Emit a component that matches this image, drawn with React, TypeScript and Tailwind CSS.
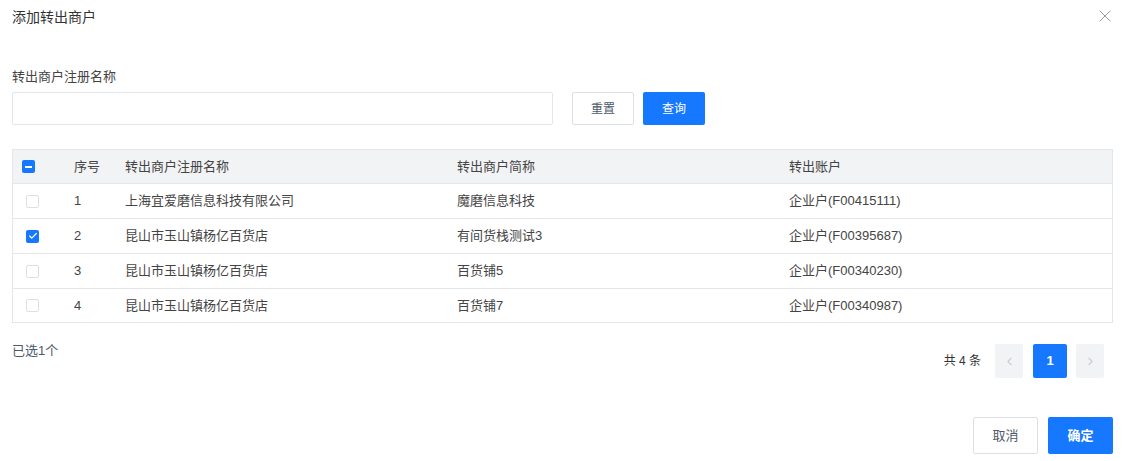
import { X, ChevronLeft, ChevronRight, Check } from "lucide-react";

interface Row {
  id: number;
  name: string;
  short: string;
  account: string;
  checked: boolean;
}

const rows: Row[] = [
  { id: 1, name: "上海宜爱磨信息科技有限公司", short: "魔磨信息科技", account: "企业户(F00415111)", checked: false },
  { id: 2, name: "昆山市玉山镇杨亿百货店", short: "有间货栈测试3", account: "企业户(F00395687)", checked: true },
  { id: 3, name: "昆山市玉山镇杨亿百货店", short: "百货铺5", account: "企业户(F00340230)", checked: false },
  { id: 4, name: "昆山市玉山镇杨亿百货店", short: "百货铺7", account: "企业户(F00340987)", checked: false },
];

const cols = "grid grid-cols-[61px_51px_332px_332px_1fr] items-center";

function Checkbox({ checked }: { checked: boolean }) {
  if (checked) {
    return (
      <span className="flex h-[13px] w-[13px] items-center justify-center rounded-[2px] bg-[#1677ff]">
        <Check size={10} strokeWidth={3} className="text-white" />
      </span>
    );
  }
  return <span className="block h-[13px] w-[13px] rounded-[2px] border border-[#dcdfe6] bg-white" />;
}

export default function App() {
  return (
    <div
      className="h-[461px] w-[1125px] bg-white text-[#444]"
      style={{ fontFamily: '"Liberation Sans", "Noto Sans CJK SC", sans-serif' }}
    >
      {/* header */}
      <div className="flex h-[25px] items-end justify-between pl-[12px] pr-[10px]">
        <h3 className="text-[14px] leading-[16px] text-[#333]">添加转出商户</h3>
        <div className="flex h-[16px] items-center">
          <X size={20} strokeWidth={1.1} className="-mt-[3px] text-[#8a8f99]" />
        </div>
      </div>

      {/* search form */}
      <div className="px-[12px] pt-[44px]">
        <div className="text-[13px] leading-[15px]">转出商户注册名称</div>
        <div className="mt-[8px] flex items-center">
          <input className="h-[33px] w-[541px] rounded-[2px] border border-[#e5e6eb] px-2 text-[13px] outline-none" />
          <button className="ml-[19px] h-[33px] w-[62px] rounded-[2px] border border-[#dcdfe6] bg-white text-[12px] text-[#4e5969]">
            重置
          </button>
          <button className="ml-[9px] h-[33px] w-[62px] rounded-[2px] bg-[#1677ff] text-[12px] text-white">
            查询
          </button>
        </div>

        {/* table */}
        <div className="mt-[24px] w-[1101px] border border-[#e5e6eb] text-[13px]">
          <div className={`${cols} h-[33px] bg-[#f2f3f5]`}>
            <div className="pl-[9px]">
              <span className="flex h-[13px] w-[13px] items-center justify-center rounded-[2px] bg-[#1677ff]">
                <span className="h-[2px] w-[7px] bg-white" />
              </span>
            </div>
            <div>序号</div>
            <div>转出商户注册名称</div>
            <div>转出商户简称</div>
            <div>转出账户</div>
          </div>
          {rows.map((r, i) => (
            <div
              key={r.id}
              className={`${cols} border-t border-[#e5e6eb] ${i === rows.length - 1 ? "h-[34px]" : "h-[35px]"}`}
            >
              <div className="pl-[13px]">
                <Checkbox checked={r.checked} />
              </div>
              <div>{r.id}</div>
              <div>{r.name}</div>
              <div>{r.short}</div>
              <div>{r.account}</div>
            </div>
          ))}
        </div>

        {/* selection + pagination */}
        <div className="mt-[21px] flex items-start justify-between pr-[9px]">
          <div className="-mt-[1px] text-[13px] leading-[15px] text-[#4e5969]">已选1个</div>
          <div className="flex items-center">
            <span className="mr-[14px] text-[12px] text-[#333]">共 4 条</span>
            <span className="flex h-[34px] w-[28px] items-center justify-center rounded-[2px] bg-[#f2f3f5]">
              <ChevronLeft size={13} className="text-[#c9cdd4]" />
            </span>
            <span className="ml-[10px] flex h-[34px] w-[34px] items-center justify-center rounded-[2px] bg-[#1677ff] text-[13px] font-bold text-white">
              1
            </span>
            <span className="ml-[9px] flex h-[34px] w-[28px] items-center justify-center rounded-[2px] bg-[#f2f3f5]">
              <ChevronRight size={13} className="text-[#c9cdd4]" />
            </span>
          </div>
        </div>

        {/* footer */}
        <div className="mt-[39px] flex justify-end">
          <button className="h-[37px] w-[65px] rounded-[2px] border border-[#dcdfe6] bg-white text-[13px] text-[#4e5969]">
            取消
          </button>
          <button className="ml-[10px] h-[37px] w-[65px] rounded-[2px] bg-[#1677ff] text-[13px] font-semibold text-white">
            确定
          </button>
        </div>
      </div>
    </div>
  );
}
